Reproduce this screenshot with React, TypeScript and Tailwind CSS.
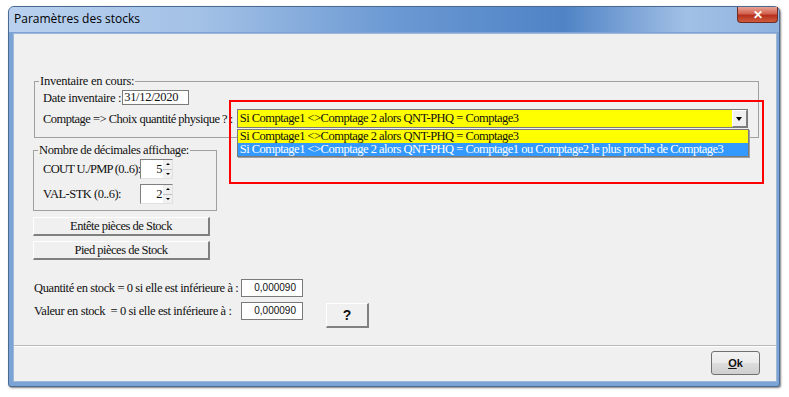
import React from "react";

const serif = "font-['Liberation_Serif',serif]";
const sans = "font-['Liberation_Sans',Arial,sans-serif]";
const t = "text-[12.5px] tracking-[-0.5px]";

function Btn3D({ children, className = "" }: { children: React.ReactNode; className?: string }) {
  return (
    <div
      className={`flex items-center justify-center bg-[#f0f0f0] border-t border-l border-t-white border-l-white border-r-2 border-b-2 border-r-[#808080] border-b-[#808080] ${className}`}
    >
      {children}
    </div>
  );
}

function Spinner({ value }: { value: string }) {
  return (
    <div className="flex w-[33px] h-[20px] bg-white border-t border-l border-t-[#808080] border-l-[#808080] border-r border-b border-r-[#e0e0e0] border-b-[#e0e0e0]">
      <div className={`flex-1 text-right pr-[1px] ${t} leading-[18px]`}>{value}</div>
      <div className="flex flex-col w-[9px]">
        <div className="flex-1 flex items-center justify-center bg-[#f0f0f0] border-b border-[#c0c0c0]">
          <div className="w-0 h-0 border-l-[2px] border-r-[2px] border-b-[2px] border-l-transparent border-r-transparent border-b-black" />
        </div>
        <div className="flex-1 flex items-center justify-center bg-[#f0f0f0]">
          <div className="w-0 h-0 border-l-[2px] border-r-[2px] border-t-[2px] border-l-transparent border-r-transparent border-t-black" />
        </div>
      </div>
    </div>
  );
}

export default function App() {
  const txt1 = "Si Comptage1 <>Comptage 2 alors QNT-PHQ = Comptage3";
  const txt2 =
    "Si Comptage1 <>Comptage 2 alors QNT-PHQ = Comptage1 ou Comptage2 le plus proche de Comptage3";
  return (
    <div className={`w-[789px] h-[397px] bg-white relative overflow-hidden ${serif} text-[#111]`}>
      {/* Window */}
      <div className="absolute left-[8px] top-[6px] w-[772px] h-[381px] rounded-t-[6px] rounded-b-[3px] border border-[#4a6a93] bg-[#7aa3d6] flex flex-col shadow-[1px_1px_2px_rgba(0,0,0,0.5)]">
        {/* Title bar */}
        <div className="h-[25px] flex items-start justify-between rounded-t-[5px] bg-[linear-gradient(90deg,#b9d1ee_0%,#a3c1e6_25%,#6b99d3_50%,#4f83c6_72%,#a2c0e5_88%,#8eb3df_100%)]">
          <div className={`pl-[5px] pt-[4px] text-[12px] leading-[16px] font-['Open_Sans',sans-serif] text-black`}>
            Paramètres des stocks
          </div>
          <div className="mr-[1px] w-[41px] h-[16px] rounded-b-[4px] border border-[#6e2a24] border-t-0 bg-[linear-gradient(180deg,#e8a293_0%,#d2624f_45%,#b5301d_55%,#cf5b3d_100%)] flex items-center justify-center">
            <span className={`${sans} text-white text-[12px] font-bold leading-none`}>✕</span>
          </div>
        </div>
        {/* Client area */}
        <div className="ml-[4px] mr-[2px] mb-[4px] mt-[1px] flex-1 border border-[#9fb6d4] bg-[#f0f0f0] flex flex-col">
          <div className="h-[311px] flex flex-col pl-[19px]">
            {/* Group 1 */}
            <div className="relative mt-[47px] ml-[1px] w-[725px] h-[57px] border border-[#a0a0a0]">
              <div className="absolute left-[4px] top-[-8px] bg-[#f0f0f0] text-[12.5px] tracking-[-0.25px] leading-[14px] px-[1px] whitespace-nowrap">
                Inventaire en cours:
              </div>
              <div className="flex items-center mt-[8px] ml-[8px] h-[15px]">
                <span className="text-[12.5px] tracking-[-0.3px] leading-[14px] whitespace-nowrap">Date inventaire :</span>
                <div className="ml-[1px] w-[67px] h-[15px] bg-white border border-[#7a7a7a] text-[12.5px] tracking-[-0.3px] leading-[13px] pl-[1px]">
                  31/12/2020
                </div>
              </div>
              <div className="flex items-center mt-[4px] ml-[8px]">
                <span className={`${t} leading-[14px] whitespace-nowrap`}>Comptage =&gt; Choix quantité physique ? :</span>
                <div className="relative ml-[4px] w-[511px] h-[19px] flex border border-[#7a7a7a] bg-[#ffff00]">
                  <div className={`flex-1 ${t} leading-[17px] pl-[2px] whitespace-nowrap`}>{txt1}</div>
                  <div className="w-[15px] h-full bg-[#f0f0f0] border-l border-t border-t-white border-l-white border-r border-b border-r-[#808080] border-b-[#808080] flex items-center justify-center">
                    <div className="w-0 h-0 border-l-[3px] border-r-[3px] border-t-[4px] border-l-transparent border-r-transparent border-t-black" />
                  </div>
                  {/* Dropdown list */}
                  <div className="absolute left-[-1px] top-[19px] w-[512px] h-[28px] border border-[#7a7a7a] bg-white shadow-[1px_1px_0_#a0a0a0] z-10">
                    <div className={`h-[13px] bg-[#ffff00] ${t} leading-[13px] pl-[2px] whitespace-nowrap`}>{txt1}</div>
                    <div className={`h-[13px] bg-[#3399ff] text-white ${t} leading-[13px] pl-[2px] whitespace-nowrap overflow-hidden`}>{txt2}</div>
                  </div>
                </div>
              </div>
            </div>
            {/* Group 2 */}
            <div className="relative mt-[12px] w-[184px] h-[61px] border border-[#a0a0a0]">
              <div className="absolute left-[4px] top-[-8px] bg-[#f0f0f0] text-[12.5px] tracking-[-0.4px] leading-[14px] px-[1px] whitespace-nowrap">
                Nombre de décimales affichage:
              </div>
              <div className="flex items-center mt-[8px] ml-[9px] h-[20px]">
                <span className="w-[97px] text-[12.5px] tracking-[-0.7px] leading-[14px] whitespace-nowrap">COUT U./PMP (0..6):</span>
                <Spinner value="5" />
              </div>
              <div className="flex items-center mt-[5px] ml-[9px] h-[20px]">
                <span className={`w-[97px] ${t} leading-[14px] whitespace-nowrap`}>VAL-STK (0..6):</span>
                <Spinner value="2" />
              </div>
            </div>
            {/* Buttons */}
            <Btn3D className={`mt-[6px] w-[177px] h-[19px] ${t} leading-[14px]`}>Entête pièces de Stock</Btn3D>
            <Btn3D className={`mt-[5px] w-[177px] h-[19px] ${t} leading-[14px]`}>Pied pièces de Stock</Btn3D>
            {/* Threshold rows */}
            <div className="flex items-start mt-[19px] ml-[1px]">
              <div className="flex flex-col">
                <div className="flex items-center h-[18px]">
                  <span className="w-[207px] text-[12.5px] tracking-[-0.4px] leading-[13px] whitespace-nowrap">
                    Quantité en stock = 0 si elle est inférieure à :
                  </span>
                  <div className={`w-[62px] h-[18px] bg-white border border-[#7a7a7a] text-right pr-[6px] ${sans} text-[10px] leading-[16px]`}>
                    0,000090
                  </div>
                </div>
                <div className="flex items-center h-[18px] mt-[5px]">
                  <span className="w-[207px] text-[12.5px] tracking-[-0.4px] leading-[13px] whitespace-nowrap">
                    Valeur en stock&nbsp; = 0 si elle est inférieure à :
                  </span>
                  <div className={`w-[62px] h-[18px] bg-white border border-[#7a7a7a] text-right pr-[6px] ${sans} text-[10px] leading-[16px]`}>
                    0,000090
                  </div>
                </div>
              </div>
              <Btn3D className={`ml-[23px] mt-[24px] w-[43px] h-[25px] ${sans} text-[14px] font-bold`}>?</Btn3D>
            </div>
          </div>
          {/* Separator */}
          <div className="h-[1px] bg-[#b8b8b8]" />
          <div className="h-[1px] bg-white" />
          <div className="flex-1 flex justify-end pr-[16px] pt-[4px]">
            <div className={`w-[49px] h-[24px] rounded-[3px] border border-[#707070] bg-[linear-gradient(180deg,#f2f2f2_0%,#ebebeb_50%,#dddddd_51%,#cfcfcf_100%)] flex items-center justify-center ${sans} text-[11px] font-bold`}>
              <span><span className="underline">O</span>k</span>
            </div>
          </div>
        </div>
      </div>
      {/* Red highlight annotation */}
      <div className="absolute left-[229px] top-[100px] w-[535px] h-[84px] border-2 border-[#ff0000] pointer-events-none" />
    </div>
  );
}
